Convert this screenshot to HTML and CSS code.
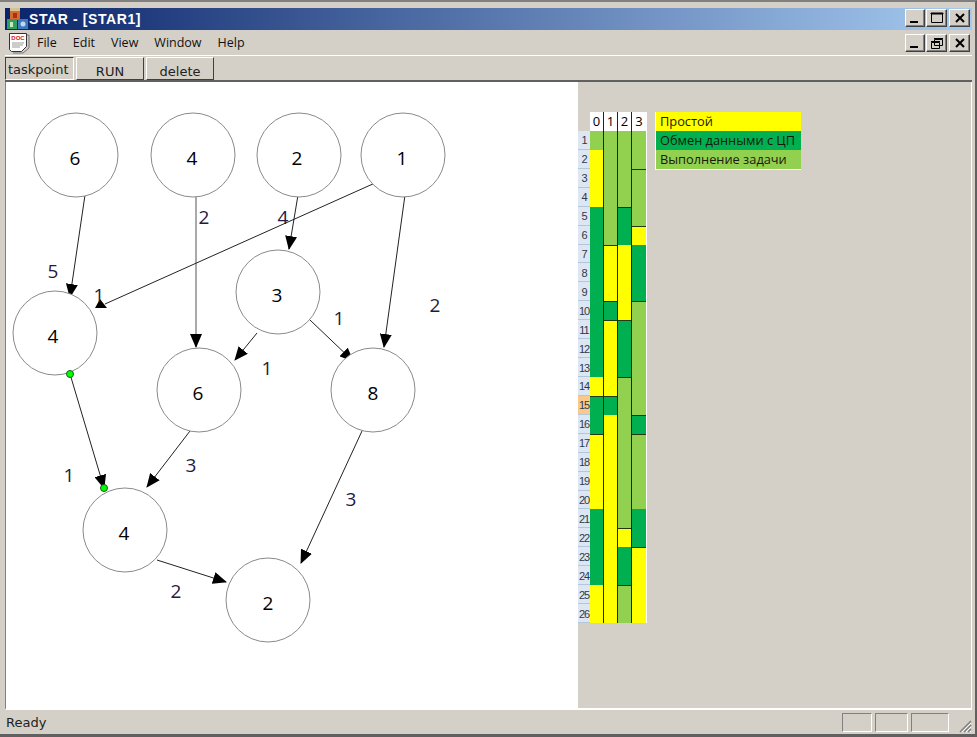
FILE: index.html
```html
<!DOCTYPE html>
<html>
<head>
	<meta charset="utf-8">
	<title>STAR - [STAR1]</title>
	<link rel="stylesheet" href="styles.css">
</head>
<body>
	<div class="window">
		<div class="titlebar">
			<svg class="app_icon" width="23" height="22" viewBox="0 0 23 22">
				<rect x="4" y="0" width="10" height="3" fill="#d8c090"/>
				<rect x="4" y="3" width="10" height="9" fill="#d8692f"/>
				<rect x="7" y="5" width="4" height="5" fill="#a83018"/>
				<rect x="1" y="11" width="10" height="10" fill="#2f9f5f"/>
				<rect x="4" y="14" width="3" height="5" fill="#c8e8c0"/>
				<rect x="12" y="11" width="10" height="10" fill="#3f78c0"/>
				<circle cx="17" cy="16" r="2.5" fill="#c0d8f0"/>
			</svg>
			<span class="title_text">STAR - [STAR1]</span>
			<div class="win_buttons">
				<button class="win_btn"><svg width="12" height="12" viewBox="0 0 12 12"><rect x="1" y="9" width="8" height="2"/></svg></button>
				<button class="win_btn"><svg width="14" height="12" viewBox="0 0 14 12"><path d="M1.5 1.5h11v9h-11z M1 1h12v1H1z" fill="none" stroke="#000"/></svg></button>
				<button class="win_btn win_btn_close"><svg width="12" height="12" viewBox="0 0 12 12"><path d="M2 2l8 8M10 2l-8 8" stroke="#000" stroke-width="2" fill="none"/></svg></button>
			</div>
		</div>
		<div class="menubar">
			<svg class="doc_icon" width="22" height="22" viewBox="0 0 22 22">
				<path d="M1.5 1.5h17v13l-5 5h-10l-2-2z" fill="#fff" stroke="#333"/>
				<text class="doc_text" x="10" y="8">DOC</text>
				<path d="M4 11h12M4 13h11M4 15h8" stroke="#999"/>
				<path d="M19 3h2v13l-6 5H5" fill="none" stroke="#777"/>
			</svg>
			<span class="menu_item menu_file">File</span>
			<span class="menu_item">Edit</span>
			<span class="menu_item">View</span>
			<span class="menu_item">Window</span>
			<span class="menu_item">Help</span>
			<div class="win_buttons">
				<button class="win_btn"><svg width="12" height="12" viewBox="0 0 12 12"><rect x="1" y="9" width="8" height="2"/></svg></button>
				<button class="win_btn"><svg width="14" height="12" viewBox="0 0 14 12"><path d="M4.5 2.5h8v6h-8z M1.5 5.5h8v6h-8z" fill="#d4d0c8" stroke="#000"/><path d="M4 1.5h9M1 4.5h9" stroke="#000"/></svg></button>
				<button class="win_btn win_btn_close"><svg width="12" height="12" viewBox="0 0 12 12"><path d="M2 2l8 8M10 2l-8 8" stroke="#000" stroke-width="2" fill="none"/></svg></button>
			</div>
		</div>
		<div class="toolbar">
			<div class="tool_btn tool_btn_first">taskpoint</div>
			<div class="tool_btn">RUN</div>
			<div class="tool_btn">delete</div>
		</div>
		<div class="client">
			<svg class="canvas" width="572" height="626" viewBox="6 82 572 626">
				<defs>
					<marker id="head" markerUnits="userSpaceOnUse" markerWidth="14" markerHeight="12" refX="13" refY="6" orient="auto">
						<path d="M0 0L14 6L0 12z" fill="#000"/>
					</marker>
				</defs>
				<g class="edges">
					<line x1="85" y1="195" x2="70" y2="297" marker-end="url(#head)"/>
					<line class="edge_soft" x1="196" y1="197" x2="196" y2="347" marker-end="url(#head)"/>
					<line x1="298" y1="195" x2="289" y2="249" marker-end="url(#head)"/>
					<line x1="375" y1="183" x2="105" y2="304"/>
					<path class="head_odd" d="M95 308L107 308L100 299z"/>
					<line x1="405" y1="195" x2="384" y2="347" marker-end="url(#head)"/>
					<line x1="257" y1="333" x2="235" y2="360" marker-end="url(#head)"/>
					<line x1="310" y1="320" x2="353" y2="361" marker-end="url(#head)"/>
					<line x1="70" y1="374" x2="104" y2="488" marker-end="url(#head)"/>
					<line x1="190" y1="431" x2="147" y2="487" marker-end="url(#head)"/>
					<line x1="362" y1="431" x2="301" y2="563" marker-end="url(#head)"/>
					<line x1="157" y1="560" x2="226" y2="582" marker-end="url(#head)"/>
				</g>
				<g class="nodes">
					<circle cx="76" cy="155" r="42"/>
					<circle cx="193" cy="155" r="42"/>
					<circle cx="299" cy="155" r="42"/>
					<circle cx="403" cy="155" r="42"/>
					<circle cx="278" cy="292" r="42"/>
					<circle cx="55" cy="333" r="42"/>
					<circle cx="199" cy="390" r="42"/>
					<circle cx="373" cy="390" r="42"/>
					<circle cx="125" cy="530" r="42"/>
					<circle cx="268" cy="600" r="42"/>
				</g>
				<g class="node_labels">
					<text x="75" y="165">6</text>
					<text x="192" y="165">4</text>
					<text x="297" y="165">2</text>
					<text x="402" y="165">1</text>
					<text x="277" y="302">3</text>
					<text x="53" y="343">4</text>
					<text x="198" y="400">6</text>
					<text x="373" y="400">8</text>
					<text x="124" y="540">4</text>
					<text x="268" y="610">2</text>
				</g>
				<g class="weights">
					<text x="53" y="278">5</text>
					<text x="99" y="302">1</text>
					<text x="204" y="224">2</text>
					<text x="283" y="224">4</text>
					<text x="339" y="325">1</text>
					<text x="435" y="312">2</text>
					<text x="267" y="375">1</text>
					<text x="191" y="472">3</text>
					<text x="69" y="482">1</text>
					<text x="351" y="506">3</text>
					<text x="176" y="598">2</text>
				</g>
				<circle class="dot" cx="70" cy="374" r="3.5"/>
				<circle class="dot" cx="104" cy="488" r="3.5"/>
			</svg>
			<div class="side_pane">
				<div class="chart">
					<div class="rows">
						<div class="rows_head"></div>
						<div class="row_no">1</div><div class="row_no">2</div><div class="row_no">3</div><div class="row_no">4</div>
						<div class="row_no">5</div><div class="row_no">6</div><div class="row_no">7</div><div class="row_no">8</div>
						<div class="row_no">9</div><div class="row_no">10</div><div class="row_no">11</div><div class="row_no">12</div>
						<div class="row_no">13</div><div class="row_no">14</div><div class="row_no row_now">15</div><div class="row_no">16</div>
						<div class="row_no">17</div><div class="row_no">18</div><div class="row_no">19</div><div class="row_no">20</div>
						<div class="row_no">21</div><div class="row_no">22</div><div class="row_no">23</div><div class="row_no">24</div>
						<div class="row_no">25</div><div class="row_no">26</div>
					</div>
					<div class="col">
						<div class="col_head">0</div>
						<div class="seg work" style="flex-grow:1"></div>
						<div class="seg idle" style="flex-grow:3"></div>
						<div class="seg comm" style="flex-grow:9"></div>
						<div class="seg idle" style="flex-grow:1"></div>
						<div class="seg comm edge" style="flex-grow:2"></div>
						<div class="seg idle edge" style="flex-grow:4"></div>
						<div class="seg comm" style="flex-grow:4"></div>
						<div class="seg idle" style="flex-grow:2"></div>
					</div>
					<div class="col">
						<div class="col_head">1</div>
						<div class="seg work" style="flex-grow:6"></div>
						<div class="seg idle edge" style="flex-grow:3"></div>
						<div class="seg comm edge" style="flex-grow:1"></div>
						<div class="seg idle edge" style="flex-grow:4"></div>
						<div class="seg comm edge" style="flex-grow:1"></div>
						<div class="seg idle" style="flex-grow:11"></div>
					</div>
					<div class="col">
						<div class="col_head">2</div>
						<div class="seg work" style="flex-grow:4"></div>
						<div class="seg comm edge" style="flex-grow:2"></div>
						<div class="seg idle" style="flex-grow:4"></div>
						<div class="seg comm edge" style="flex-grow:3"></div>
						<div class="seg work edge" style="flex-grow:8"></div>
						<div class="seg idle edge" style="flex-grow:1"></div>
						<div class="seg comm" style="flex-grow:2"></div>
						<div class="seg work edge" style="flex-grow:2"></div>
					</div>
					<div class="col col_last">
						<div class="col_head">3</div>
						<div class="seg work" style="flex-grow:2"></div>
						<div class="seg work edge" style="flex-grow:3"></div>
						<div class="seg idle edge" style="flex-grow:1"></div>
						<div class="seg comm" style="flex-grow:3"></div>
						<div class="seg work edge" style="flex-grow:6"></div>
						<div class="seg comm edge" style="flex-grow:1"></div>
						<div class="seg work edge" style="flex-grow:4"></div>
						<div class="seg comm" style="flex-grow:2"></div>
						<div class="seg idle edge" style="flex-grow:4"></div>
					</div>
				</div>
				<div class="legend">
					<div class="legend_row idle">Простой</div>
					<div class="legend_row comm">Обмен данными с ЦП</div>
					<div class="legend_row work">Выполнение задачи</div>
				</div>
			</div>
		</div>
		<div class="statusbar">
			<span class="status_text">Ready</span>
			<div class="status_pane status_pane_a"></div>
			<div class="status_pane status_pane_b"></div>
			<div class="status_pane status_pane_c"></div>
			<svg class="grip" width="13" height="13" viewBox="0 0 13 13">
				<path d="M12 1L1 12M12 5L5 12M12 9L9 12" stroke="#808080" stroke-width="1.5"/>
				<path d="M12 3L3 12M12 7L7 12M12 11L11 12" stroke="#fff"/>
			</svg>
		</div>
	</div>
</body>
</html>
```

FILE: styles.css
```css
html, body {
	margin: 0;
	padding: 0;
	background-color: #d4d0c8;
}

.window {
	box-sizing: border-box;
	width: 977px;
	height: 737px;
	padding: 6px 3px 1px 5px;
	display: flex;
	flex-direction: column;
	background-color: #d4d0c8;
	border-top: 2px solid #808080;
	border-right: 2px solid #606060;
	border-bottom: 3px solid #606060;
	font-family: "Liberation Sans", sans-serif;
	color: #000;
}

.titlebar {
	box-sizing: border-box;
	height: 22px;
	display: flex;
	align-items: center;
	background: linear-gradient(to right, #0a246a, #a6caf0);
	flex: none;
}
.app_icon {
	margin-left: 1px;
	flex: none;
}
.title_text {
	font-size: 14px;
	font-weight: bold;
	color: #fff;
	letter-spacing: 0.6px;
}

.win_buttons {
	margin-left: auto;
	padding-right: 2px;
	display: flex;
	gap: 1px;
}
.titlebar .win_buttons {
	margin-bottom: 2px;
}
.win_btn {
	box-sizing: border-box;
	width: 21px;
	height: 18px;
	padding: 0;
	display: flex;
	align-items: center;
	justify-content: center;
	background-color: #d4d0c8;
	border: 1px solid;
	border-color: #fff #404040 #404040 #fff;
	box-shadow: inset -1px -1px 0 #808080;
}
.win_btn:first-child {
	width: 20px;
}
.win_btn_close {
	margin-left: 1px;
}

.menubar {
	box-sizing: border-box;
	height: 26px;
	display: flex;
	align-items: center;
	gap: 16px;
	border-bottom: 1px solid #fff;
	flex: none;
}
.doc_icon {
	margin-left: 3px;
	flex: none;
}
.doc_text {
	font-family: "Liberation Sans", sans-serif;
	font-size: 6px;
	font-weight: bold;
	text-anchor: middle;
	fill: #d02020;
}
.menu_item {
	font-family: "Open Sans", sans-serif;
	font-size: 12.5px;
	color: #111;
}
.menu_file {
	margin-left: -9px;
}

.toolbar {
	box-sizing: border-box;
	height: 25px;
	margin-top: 1px;
	display: flex;
	gap: 2px;
	border-bottom: 2px solid #606060;
	flex: none;
}
.tool_btn {
	box-sizing: border-box;
	width: 68px;
	height: 23px;
	padding-top: 5px;
	text-align: center;
	font-family: "DejaVu Sans", sans-serif;
	font-size: 13px;
	line-height: 17px;
	color: #222;
	background-color: #d4d0c8;
	border: 1px solid;
	border-color: #fff #404040 #404040 #fff;
}
.tool_btn_first {
	width: 69px;
	padding: 3px 0 0 2px;
	text-align: left;
	border-color: #404040 #fff #fff #404040;
}

.client {
	flex: 1;
	min-height: 0;
	display: flex;
	border-bottom: 2px solid #fff;
	border-left: 1px solid #808080;
	border-right: 1px solid #fff;
}
.canvas {
	background-color: #fff;
	display: block;
	flex: none;
}
.side_pane {
	flex: 1;
	padding: 30px 0 0 0;
	display: flex;
	align-items: flex-start;
	gap: 8px;
	background-color: #d4d0c8;
}

.edges line {
	stroke: #222;
	stroke-width: 1;
}
.edges .edge_soft {
	stroke: #555;
}
.head_odd {
	fill: #000;
}
.nodes circle {
	fill: #fff;
	stroke: #8a8a8a;
	stroke-width: 1;
}
.node_labels text, .weights text {
	font-family: "Open Sans", sans-serif;
	font-size: 19px;
	text-anchor: middle;
}
.node_labels text {
	fill: #000;
}
.weights text {
	fill: #241a40;
}
.dot {
	fill: #00ff00;
	stroke: #1a5a1a;
	stroke-width: 1;
}

.chart {
	display: flex;
	height: 511px;
	background-color: #fff;
	padding-right: 1px;
	flex: none;
}
.rows {
	width: 12px;
	display: flex;
	flex-direction: column;
	background-color: #d4d0c8;
}
.rows_head {
	height: 19px;
	flex: none;
}
.row_no {
	flex: 1;
	display: flex;
	align-items: center;
	justify-content: center;
	background-color: #dde7f4;
	box-shadow: inset 0 -1px 0 #b4c6dc;
	font-family: "Liberation Sans", sans-serif;
	font-size: 11px;
	letter-spacing: -1px;
	color: #303848;
}
.row_now {
	background-color: #fac88a;
}
.col {
	box-sizing: border-box;
	width: 14px;
	display: flex;
	flex-direction: column;
	background-color: #fff;
	border-right: 1px solid #1a2a10;
}
.col_last {
	border-right: 0;
}
.col_head {
	height: 19px;
	flex: none;
	font-family: "Open Sans", sans-serif;
	font-size: 13px;
	line-height: 19px;
	text-align: center;
	background-color: #fff;
}
.seg {
	flex-basis: 0;
}
.edge {
	box-shadow: inset 0 1px 0 #1f3a12;
}
.idle {
	background-color: #ffff00;
}
.comm {
	background-color: #00b050;
}
.work {
	background-color: #92d050;
}

.legend {
	box-sizing: border-box;
	width: 146px;
	border-bottom: 1px solid #fff;
	border-left: 1px solid #fff;
	flex: none;
}
.legend_row {
	height: 19px;
	padding-left: 4px;
	font-family: "Open Sans", sans-serif;
	font-size: 12.8px;
	line-height: 19px;
	color: #1a1a0a;
}

.statusbar {
	box-sizing: border-box;
	height: 23px;
	padding-top: 1px;
	display: flex;
	align-items: center;
	flex: none;
}
.status_text {
	font-family: "DejaVu Sans", sans-serif;
	font-size: 13px;
	margin-left: 1px;
	color: #222;
}
.status_pane {
	box-sizing: border-box;
	height: 19px;
	border: 1px solid;
	border-color: #808080 #fff #fff #808080;
}
.status_pane_a {
	margin-left: auto;
	width: 30px;
	margin-right: 3px;
}
.status_pane_b {
	width: 33px;
	margin-right: 3px;
}
.status_pane_c {
	width: 38px;
	margin-right: 10px;
}
.grip {
	flex: none;
	align-self: flex-end;
}
```
